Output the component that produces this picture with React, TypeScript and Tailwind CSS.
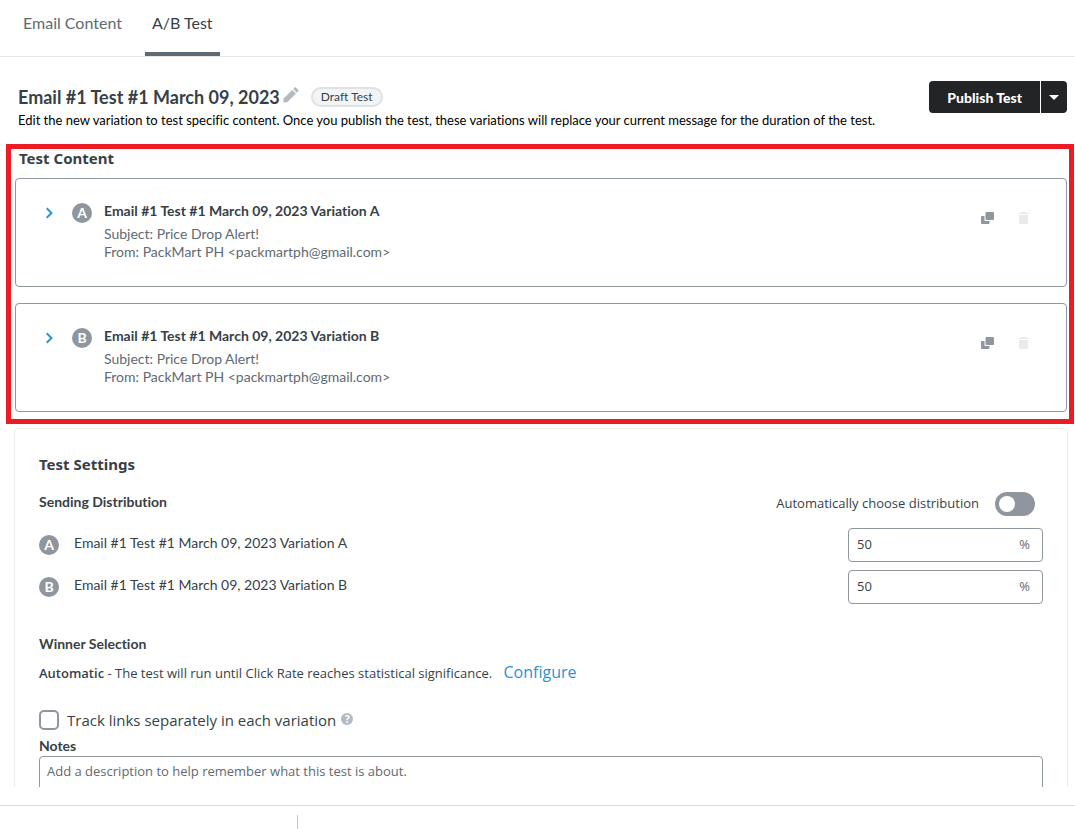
import React, { useState } from 'react';

const VARIATIONS = [
  { letter: 'A', name: 'Email #1 Test #1 March 09, 2023 Variation A' },
  { letter: 'B', name: 'Email #1 Test #1 March 09, 2023 Variation B' },
];

function LetterBadge({ letter }: { letter: string }) {
  return (
    <span className="flex h-5 w-5 shrink-0 items-center justify-center rounded-full bg-[#8f969e] text-[14px] leading-5 font-bold text-white">
      {letter}
    </span>
  );
}

function PencilIcon() {
  return (
    <svg width="16" height="16" viewBox="0 0 16 16" fill="#b3bac2" aria-hidden="true">
      <path d="M0.3 15.6 L0.6 11.5 L9.2 2.9 L12.9 6.6 L4.3 15.2 Z" />
      <path d="M10.1 2 L11.5 0.6 Q12.2 0 12.9 0.6 L15.3 3 Q15.9 3.7 15.3 4.3 L13.8 5.7 Z" />
    </svg>
  );
}

function CopyIcon() {
  return (
    <svg width="13" height="12" viewBox="0 0 13 12" fill="#8f969e" aria-hidden="true">
      <rect x="4.5" y="0" width="8.5" height="8" rx="1" />
      <path d="M1 4 H3.5 V8 Q3.5 9 4.5 9 H8.5 V11 Q8.5 12 7.5 12 H1 Q0 12 0 11 V5 Q0 4 1 4 Z" />
    </svg>
  );
}

function TrashIcon() {
  return (
    <svg width="11" height="12" viewBox="0 0 11 12" fill="#e8ebeb" aria-hidden="true">
      <path d="M3 0 H8 V1 H11 V2 H0 V1 H3 Z" />
      <path d="M1 3 H10 V11 Q10 12 9 12 H2 Q1 12 1 11 Z" />
    </svg>
  );
}

function VariationCard({ letter, name }: { letter: string; name: string }) {
  return (
    <article className="flex h-[109px] items-start rounded border border-[#8f969e] bg-white pt-6 pr-[37px] pl-[29px]">
      <button aria-label={`Expand variation ${letter}`} className="flex h-5 w-[10px] items-center justify-center">
        <svg width="8" height="12" viewBox="0 0 8 12" fill="none" stroke="#2a93d5" strokeWidth="2" aria-hidden="true">
          <path d="M0.7 1.2 L5.5 6 L0.7 10.8" />
        </svg>
      </button>
      <div className="ml-[17px]">
        <LetterBadge letter={letter} />
      </div>
      <div className="ml-3 grow">
        <h3 className="text-[14px] leading-4 font-bold text-[#373f47]">{name}</h3>
        <p className="mt-1.5 text-[14px] leading-[18px] text-[#606a72]">Subject: Price Drop Alert!</p>
        <p className="text-[14px] leading-[18px] text-[#606a72]">From: PackMart PH &lt;packmartph@gmail.com&gt;</p>
      </div>
      <div className="flex gap-6 pt-[9px]">
        <button aria-label="Duplicate">
          <CopyIcon />
        </button>
        <button aria-label="Delete" disabled>
          <TrashIcon />
        </button>
      </div>
    </article>
  );
}

function DistributionRow({ letter, name }: { letter: string; name: string }) {
  const id = `share-${letter}`;
  return (
    <div className="flex h-[34px] items-center">
      <LetterBadge letter={letter} />
      <label htmlFor={id} className="ml-[15px] grow pb-1 text-[14px] leading-5 text-[#373f47]">
        {name}
      </label>
      <div className="flex h-[34px] w-[195px] items-center rounded border border-[#8f969e] px-2 font-['Open_Sans',sans-serif]">
        <input id={id} defaultValue="50" className="min-w-0 grow bg-transparent text-[13px] text-[#373f47] outline-none" />
        <span className="pr-1 text-[13px] text-[#606a72]">%</span>
      </div>
    </div>
  );
}

export default function App() {
  const [auto, setAuto] = useState(false);
  return (
    <div className="bg-white font-[Lato,sans-serif] text-[#373f47] [font-variant-ligatures:none]">
      <nav className="flex h-[57px] gap-4 border-b border-[#e6e8ea] pl-4 text-[16px]">
        <a href="#content" className="h-14 px-[7px] pt-[11px] leading-6 text-[#606a72]">
          Email Content
        </a>
        <a href="#ab" aria-current="page" className="h-14 border-b-4 border-[#606a72] px-[7px] pt-[11px] leading-6">
          A/B Test
        </a>
      </nav>

      <header className="flex items-start justify-between pt-6 pr-2 pb-4 pl-[18px]">
        <div>
          <div className="flex h-[31px] items-center">
            <h1 className="text-[18px] leading-6 font-bold">Email #1 Test #1 March 09, 2023</h1>
            <button aria-label="Rename test" className="mb-1 ml-[3px]">
              <PencilIcon />
            </button>
            <span className="ml-3 rounded-full border-2 border-[#dfe2e5] bg-[#f2f4f6] px-2 text-[12px] leading-4">
              Draft Test
            </span>
          </div>
          <p className="text-[13px] leading-4 text-black">
            Edit the new variation to test specific content. Once you publish the test, these variations will replace your
            current message for the duration of the test.
          </p>
        </div>
        <div className="flex h-8 shrink-0 gap-px overflow-hidden rounded-sm text-[14px] font-black text-white">
          <button className="bg-[#222426] px-[18px]">Publish Test</button>
          <button aria-label="More publish options" className="flex w-[26px] items-center justify-center bg-[#222426]">
            <svg width="10" height="5" viewBox="0 0 10 5" fill="white" aria-hidden="true">
              <path d="M0 0 H10 L5 5 Z" />
            </svg>
          </button>
        </div>
      </header>

      <section className="mr-px ml-1.5 border-[5px] border-[#ed1c24] pr-0.5 pb-[7px] pl-1">
        <h2 className="pb-[11px] pl-1 font-['Noto_Sans',sans-serif] text-[15px] leading-[18px] font-bold">Test Content</h2>
        <div className="flex flex-col gap-4">
          {VARIATIONS.map((v) => (
            <VariationCard key={v.letter} {...v} />
          ))}
        </div>
      </section>

      <section className="mx-[7px] mt-1 h-[359px] overflow-hidden pl-[7px]">
        <div className="rounded border border-[#eaecee] px-6 pt-[25px]">
          <h2 className="font-['Noto_Sans',sans-serif] text-[15px] leading-5 font-bold">Test Settings</h2>
          <div className="mt-[18px] flex h-6 items-center justify-between">
            <h3 className="pb-1 text-[14px] leading-5 font-bold">Sending Distribution</h3>
            <label className="flex items-center gap-4 pr-2 font-['Open_Sans',sans-serif] text-[13px]">
              Automatically choose distribution
              <input
                type="checkbox"
                role="switch"
                checked={auto}
                onChange={() => setAuto(!auto)}
                className="h-6 w-10 appearance-none rounded-full bg-[#8f969e] p-1 before:block before:h-4 before:w-4 before:rounded-full before:bg-white checked:bg-[#2a93d5] checked:before:ml-auto"
              />
            </label>
          </div>
          <div className="mt-3 flex flex-col gap-2">
            {VARIATIONS.map((v) => (
              <DistributionRow key={v.letter} {...v} />
            ))}
          </div>
          <h3 className="mt-[30px] text-[14px] leading-5 font-bold">Winner Selection</h3>
          <p className="mt-2 font-['Open_Sans',sans-serif] text-[13px] leading-5">
            <span className="font-semibold">Automatic</span> - The test will run until Click Rate reaches statistical
            significance.{' '}
            <a href="#configure" className="ml-2 text-[16px] text-[#2a93d5]">
              Configure
            </a>
          </p>
          <div className="mt-[27px] flex h-5 items-center font-['Open_Sans',sans-serif] text-[15px]">
            <input
              id="track"
              type="checkbox"
              className="h-5 w-5 appearance-none rounded-[5px] border-2 border-[#8f969e] bg-white checked:bg-[#2a93d5]"
            />
            <label htmlFor="track" className="ml-2">
              Track links separately in each variation
            </label>
            <span className="mb-0.5 ml-[5px] flex h-3 w-3 items-center justify-center rounded-full bg-[#b3bac2] text-[10px] leading-3 font-bold text-white">
              ?
            </span>
          </div>
          <label htmlFor="notes" className="mt-2 block pb-0.5 text-[14px] leading-4 font-bold">
            Notes
          </label>
          <textarea
            id="notes"
            placeholder="Add a description to help remember what this test is about."
            className="block h-20 w-full resize-none rounded border border-[#8f969e] px-[7px] py-1 font-['Open_Sans',sans-serif] text-[13px] leading-5 placeholder:text-[#606a72]"
          />
        </div>
      </section>

      <footer className="mt-[18px] border-t border-[#d9dbdd] pt-[9px]">
        <div className="ml-[297px] h-[14px] border-l border-[#c4c7ca]" />
      </footer>
    </div>
  );
}
